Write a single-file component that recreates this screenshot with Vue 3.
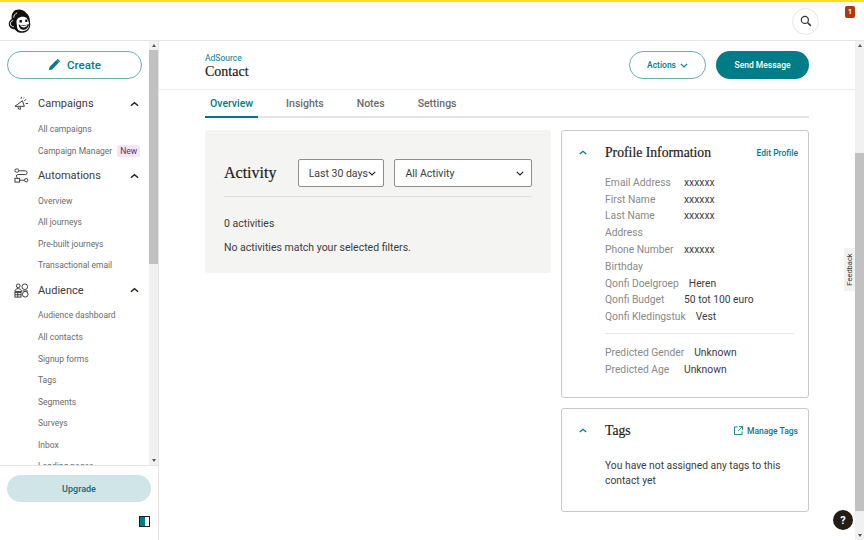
<script setup>
const groups = [
  {
    name: 'Campaigns',
    icon: 'campaigns',
    items: [{ label: 'All campaigns' }, { label: 'Campaign Manager', badge: 'New' }]
  },
  {
    name: 'Automations',
    icon: 'automations',
    items: [
      { label: 'Overview' },
      { label: 'All journeys' },
      { label: 'Pre-built journeys' },
      { label: 'Transactional email' }
    ]
  },
  {
    name: 'Audience',
    icon: 'audience',
    items: [
      { label: 'Audience dashboard' },
      { label: 'All contacts' },
      { label: 'Signup forms' },
      { label: 'Tags' },
      { label: 'Segments' },
      { label: 'Surveys' },
      { label: 'Inbox' },
      { label: 'Landing pages' }
    ]
  }
]

const tabs = ['Overview', 'Insights', 'Notes', 'Settings']

const profile = [
  ['Email Address', 'xxxxxx'],
  ['First Name', 'xxxxxx'],
  ['Last Name', 'xxxxxx'],
  ['Address', ''],
  ['Phone Number', 'xxxxxx'],
  ['Birthday', ''],
  ['Qonfi Doelgroep', 'Heren'],
  ['Qonfi Budget', '50 tot 100 euro'],
  ['Qonfi Kledingstuk', 'Vest']
]

const predicted = [
  ['Predicted Gender', 'Unknown'],
  ['Predicted Age', 'Unknown']
]
</script>

<template>
  <div class="app">
    <!-- Top bar -->
    <header class="topbar">
      <svg class="logo" viewBox="0 0 24 26">
        <path fill="#111" d="M8 1c4-1.500 9 0 11 3 3 2 4 6 4 10 1 4-1 9-6 10.500-4 1-8-.5-10-3.500-4 0-7-3-6-7 .5-2 2-3 3-4C3 6 5 2.500 8 1z"/>
        <path fill="#fff" d="M10 10c3-2.500 8-2.500 10 0 2 3 3 7 1 10-2 3.500-8 4-10.500 1.500-1.500-2-1-4.500-1.500-6.500-.5-2 0-4 1-5z"/>
        <path fill="#111" d="M12 11.500h2.500V14H12zM18 11h2.200v2.500H18zM11 16c3.500 1.200 7.500 1 11-.5-.3 4-3.500 6-6 6s-4.500-2-5-5.500z"/>
        <path fill="#fff" d="M12.500 17c2.500.6 5.500.5 8-.3-.6 1.500-2.600 2.500-4 2.500s-3.400-.8-4-2.200z"/>
        <path fill="none" stroke="#fff" stroke-width="1" d="M6 9c0-2 1-4 3.500-5M5.300 12c-2 .5-3 2-2.800 3.500.2 1.800 1.500 3 3.500 3"/>
      </svg>
      <button class="search-btn">
        <svg viewBox="0 0 16 16" width="12" height="12">
          <circle cx="6.500" cy="6.500" r="4.700" fill="none" stroke="#333" stroke-width="1.600"/>
          <path d="M10 10l4.500 4.500" stroke="#333" stroke-width="2"/>
        </svg>
      </button>
      <span class="notif">1</span>
    </header>

    <div class="body">
      <!-- Sidebar -->
      <aside class="sidebar">
        <div class="side-scroll">
          <nav class="nav">
            <button class="create-btn">
              <svg viewBox="0 0 14 14" width="12" height="12">
                <path fill="#007c89" d="M9.800 1.200l3 3-8 8L1 13l.8-3.800zM10.800.300l.8-.3 2.400 2.400-.3.800-.6.600-3-3z"/>
              </svg>
              Create
            </button>
            <section v-for="g in groups" :key="g.name" class="group">
              <div class="group-head">
                <svg class="group-icon" viewBox="0 0 16 16">
                  <g v-if="g.icon === 'campaigns'" fill="none" stroke="#333" stroke-width="1">
                    <path d="M1 11l8-6 2 6z"/>
                    <path d="M4 11.500l1 2.500h2l-.5-2.500"/>
                    <path d="M7.500 3l.5-2M11 5l2-1.500M12.500 8H15M10 2.500l.8-1"/>
                  </g>
                  <g v-else-if="g.icon === 'automations'" fill="none" stroke="#333" stroke-width="1">
                    <rect x="1" y="1" width="4" height="3.500" rx="1.500"/>
                    <rect x="1" y="11" width="5" height="4"/>
                    <circle cx="13" cy="13" r="1.800"/>
                    <path d="M5 3h7.500c2 0 2 4 0 4H4c-2 0-2 3 0 4M6 13h5"/>
                  </g>
                  <g v-else fill="none" stroke="#333" stroke-width="1">
                    <circle cx="4.500" cy="3" r="2"/>
                    <circle cx="11.500" cy="4" r="3"/>
                    <path d="M1 9c0-2 1.500-3 3.500-3S8 7 8 9z"/>
                    <rect x="1" y="10" width="6.500" height="5"/>
                    <path d="M1 12.500h6.500M4 10v5"/>
                    <circle cx="12" cy="12" r="3"/>
                    <path d="M9 8.500h6"/>
                  </g>
                </svg>
                <span class="group-name">{{ g.name }}</span>
                <svg class="caret" viewBox="0 0 10 6" width="9" height="6">
                  <path d="M1 5l4-3.500L9 5" fill="none" stroke="#241c15" stroke-width="1.500"/>
                </svg>
              </div>
              <a v-for="item in g.items" :key="item.label" class="nav-item">
                {{ item.label }}
                <span v-if="item.badge" class="badge">{{ item.badge }}</span>
              </a>
            </section>
          </nav>
          <div class="scrollbar">
            <span class="arrow up"></span>
            <div class="track side-track"><div class="thumb"></div></div>
            <span class="arrow down"></span>
          </div>
        </div>
        <div class="side-foot">
          <button class="upgrade-btn">Upgrade</button>
          <div class="collapse-row">
            <span class="collapse-icon"></span>
          </div>
        </div>
      </aside>

      <!-- Main -->
      <main class="main">
        <div class="main-inner">
          <div class="page-head">
            <div>
              <a class="crumb">AdSource</a>
              <h1>Contact</h1>
            </div>
            <div class="head-actions">
              <button class="btn-outline">
                Actions
                <svg viewBox="0 0 10 6" width="8" height="5">
                  <path d="M1 1l4 3.800L9 1" fill="none" stroke="#007c89" stroke-width="1.500"/>
                </svg>
              </button>
              <button class="btn-solid">Send Message</button>
            </div>
          </div>

          <div class="page-body">
            <div class="tabs">
              <a v-for="(t, i) in tabs" :key="t" class="tab" :class="{ active: i === 0 }">{{ t }}</a>
            </div>

            <div class="columns">
              <div class="activity">
                <div class="activity-head">
                  <h2>Activity</h2>
                  <div class="select short">
                    Last 30 days
                    <svg viewBox="0 0 10 6" width="8" height="5"><path d="M1 1l4 3.800L9 1" fill="none" stroke="#241c15" stroke-width="1.400"/></svg>
                  </div>
                  <div class="select long">
                    All Activity
                    <svg viewBox="0 0 10 6" width="8" height="5"><path d="M1 1l4 3.800L9 1" fill="none" stroke="#241c15" stroke-width="1.400"/></svg>
                  </div>
                </div>
                <p class="count">0 activities</p>
                <p class="empty">No activities match your selected filters.</p>
              </div>

              <div class="side-cards">
                <div class="card profile-card">
                  <div class="card-head">
                    <svg class="card-caret" viewBox="0 0 10 6" width="8" height="5">
                      <path d="M1 5l4-3.500L9 5" fill="none" stroke="#007c89" stroke-width="1.600"/>
                    </svg>
                    <h3>Profile Information</h3>
                    <a class="card-link">Edit Profile</a>
                  </div>
                  <div class="rows">
                    <div v-for="r in profile" :key="r[0]" class="row">
                      <span class="label">{{ r[0] }}</span>
                      <span class="value">{{ r[1] }}</span>
                    </div>
                  </div>
                  <hr class="rows-rule" />
                  <div class="rows">
                    <div v-for="r in predicted" :key="r[0]" class="row">
                      <span class="label">{{ r[0] }}</span>
                      <span class="value">{{ r[1] }}</span>
                    </div>
                  </div>
                </div>

                <div class="card tags-card">
                  <div class="card-head">
                    <svg class="card-caret" viewBox="0 0 10 6" width="8" height="5">
                      <path d="M1 5l4-3.500L9 5" fill="none" stroke="#007c89" stroke-width="1.600"/>
                    </svg>
                    <h3>Tags</h3>
                    <a class="card-link">
                      <svg viewBox="0 0 10 10" width="9" height="9">
                        <path d="M4 1H.600v8.400H9V6M5.500.600h4v4M9.300.800L4.500 5.500" fill="none" stroke="#007c89" stroke-width="1"/>
                      </svg>
                      Manage Tags
                    </a>
                  </div>
                  <p class="tags-text">You have not assigned any tags to this contact yet</p>
                </div>
              </div>
            </div>
          </div>

          <div class="feedback"><span>Feedback</span></div>
          <button class="help">?</button>
        </div>
        <div class="scrollbar">
          <span class="arrow up"></span>
          <div class="track main-track"><div class="thumb"></div></div>
          <span class="arrow down"></span>
        </div>
      </main>
    </div>
  </div>
</template>

<style scoped>
.app {
  width: 864px;
  height: 540px;
  display: flex;
  flex-direction: column;
  overflow: hidden;
  background: #fff;
  color: #241c15;
  font-family: Roboto, "Liberation Sans", sans-serif;
  font-size: 11.5px;
}

button {
  font-family: inherit;
  cursor: pointer;
}

/* Top bar */
.topbar {
  position: relative;
  flex: none;
  height: 41px;
  box-sizing: border-box;
  display: flex;
  align-items: center;
  border-top: 2px solid #ffe01b;
  border-bottom: 1px solid #e4e4e2;
  padding-left: 8px;
}

.logo {
  width: 23px;
  height: 25px;
}

.search-btn {
  margin-left: auto;
  margin-right: 45px;
  width: 27px;
  height: 27px;
  padding: 0;
  border: 1px solid #e6e6e4;
  border-radius: 50%;
  background: #fff;
  display: flex;
  align-items: center;
  justify-content: center;
}

.notif {
  position: absolute;
  left: 845px;
  top: 4px;
  width: 10px;
  height: 12px;
  border-radius: 2px;
  background: #b0380e;
  color: #fff;
  font-size: 8px;
  font-weight: 500;
  line-height: 12px;
  text-align: center;
}

.body {
  flex: 1;
  min-height: 0;
  display: flex;
}

/* Sidebar */
.sidebar {
  flex: none;
  width: 158px;
  display: flex;
  flex-direction: column;
  border-right: 1px solid #e4e4e2;
}

.side-scroll {
  flex: 1;
  min-height: 0;
  display: flex;
}

.nav {
  flex: 1;
  min-width: 0;
  overflow: hidden;
  padding: 10px 7px 0;
}

.create-btn {
  width: 135px;
  height: 28px;
  box-sizing: border-box;
  display: flex;
  align-items: center;
  justify-content: center;
  gap: 7px;
  padding: 0;
  border: 1px solid #6aaeb6;
  border-radius: 14px;
  background: #fff;
  color: #007c89;
  font-size: 11.5px;
  font-weight: 500;
}

.group-head {
  height: 28.400px;
  display: flex;
  align-items: center;
}

.group:first-of-type .group-head {
  margin-top: 10.800px;
}

.group-icon {
  width: 15px;
  height: 15px;
  margin-left: 7px;
  flex: none;
}

.group-name {
  margin-left: 9px;
  font-size: 11px;
  color: #403b3b;
}

.caret {
  margin-left: auto;
  margin-right: 3px;
}

.nav-item {
  display: flex;
  align-items: center;
  height: 21.600px;
  padding-left: 31px;
  font-size: 8.500px;
  color: #6b6b6b;
  white-space: nowrap;
}

.badge {
  margin-left: 5px;
  padding: 1px 3px;
  border-radius: 2px;
  background: #f8e3f7;
  color: #4a3a55;
  font-size: 8.500px;
}

.side-foot {
  flex: none;
  height: 75px;
  box-sizing: border-box;
  padding: 9px 6px 0 7px;
  border-top: 1px solid #e4e4e2;
}

.upgrade-btn {
  width: 144px;
  height: 27px;
  padding: 0;
  border: 0;
  border-radius: 14px;
  background: #d0e5e8;
  color: #1d6470;
  font-size: 9px;
  font-weight: 500;
}

.collapse-row {
  display: flex;
  justify-content: flex-end;
  margin-top: 14px;
  padding-right: 2px;
}

.collapse-icon {
  width: 11px;
  height: 11px;
  box-sizing: border-box;
  border: 1px solid #241c15;
  background: linear-gradient(to right, #007c89 55%, #fff 55%);
}

/* Scrollbars */
.scrollbar {
  flex: none;
  width: 9px;
  display: flex;
  flex-direction: column;
  background: #f1f1f1;
}

.arrow {
  flex: none;
  height: 9px;
  display: flex;
  align-items: center;
  justify-content: center;
}

.arrow::before {
  content: "";
  border-left: 2.500px solid transparent;
  border-right: 2.500px solid transparent;
}

.arrow.up::before {
  border-bottom: 3px solid #555;
}

.arrow.down::before {
  border-top: 3px solid #555;
}

.track {
  flex: 1;
  min-height: 0;
}

.thumb {
  background: #c1c1c1;
}

.side-track .thumb {
  height: 214px;
}

.main-track {
  padding-top: 103px;
}

.main-track .thumb {
  height: 358px;
}

/* Main */
.main {
  flex: 1;
  min-width: 0;
  display: flex;
}

.main-inner {
  position: relative;
  flex: 1;
  min-width: 0;
  overflow: hidden;
}

.page-head {
  height: 49px;
  box-sizing: border-box;
  display: flex;
  justify-content: space-between;
  align-items: center;
  padding: 0 46px;
  border-bottom: 1px solid #eeeeec;
}

.crumb {
  display: block;
  margin-top: 2px;
  color: #007c89;
  font-size: 8.500px;
  line-height: 11px;
}

h1,
h2,
h3 {
  margin: 0;
  font-family: "Liberation Serif", serif;
  font-weight: 400;
  color: #241c15;
}

h1 {
  font-size: 14px;
  line-height: 16px;
  -webkit-text-stroke: 0.2px #241c15;
}

.head-actions {
  display: flex;
  gap: 10px;
}

.btn-outline,
.btn-solid {
  height: 28px;
  box-sizing: border-box;
  padding: 0;
  border-radius: 14px;
  font-size: 8.500px;
  font-weight: 500;
}

.btn-outline {
  width: 77px;
  display: flex;
  align-items: center;
  justify-content: center;
  gap: 4px;
  border: 1px solid #6aaeb6;
  background: #fff;
  color: #007c89;
}

.btn-solid {
  width: 93px;
  border: 0;
  background: #007c89;
  color: #fff;
}

.page-body {
  padding: 0 46px;
}

.tabs {
  display: flex;
  gap: 23px;
  height: 28px;
  box-sizing: border-box;
  border-bottom: 2px solid #e4e4e2;
}

.tab {
  height: 28px;
  box-sizing: border-box;
  padding: 0 5px;
  line-height: 28px;
  font-size: 10.500px;
  font-weight: 500;
  color: #6b6b6b;
}

.tab.active {
  color: #007c89;
  border-bottom: 2px solid #007c89;
}

.columns {
  display: grid;
  grid-template-columns: 346px 248px;
  gap: 10px;
  align-items: start;
  margin-top: 12px;
}

.activity {
  height: 143px;
  box-sizing: border-box;
  padding: 29px 19px 0;
  border-radius: 3px;
  background: #f4f4f2;
}

.activity-head {
  display: flex;
  align-items: center;
  height: 28px;
  padding-bottom: 9px;
  border-bottom: 1px solid #dfdfdd;
}

.activity-head h2 {
  width: 74px;
  font-size: 16px;
  -webkit-text-stroke: 0.2px #241c15;
}

.select {
  height: 28px;
  box-sizing: border-box;
  display: flex;
  align-items: center;
  justify-content: space-between;
  padding: 0 7px 0 10px;
  border: 1px solid #8f8f8d;
  border-radius: 2px;
  background: #fff;
  font-size: 10.500px;
  color: #403b3b;
  white-space: nowrap;
}

.select.short {
  width: 87px;
}

.select.long {
  width: 138px;
  margin-left: 10px;
}

.count {
  margin: 20px 0 0;
  font-size: 10.500px;
  line-height: 14px;
  color: #403b3b;
}

.empty {
  margin: 10px 0 0;
  font-size: 10.500px;
  line-height: 14px;
  color: #403b3b;
}

.side-cards {
  display: flex;
  flex-direction: column;
  gap: 10px;
}

.card {
  box-sizing: border-box;
  padding: 0 10px 0 43px;
  border: 1px solid #c9c9c7;
  border-radius: 3px;
}

.profile-card {
  height: 268px;
}

.tags-card {
  height: 104px;
}

.card-head {
  position: relative;
  display: flex;
  align-items: center;
  justify-content: space-between;
  height: 43px;
}

.card-caret {
  position: absolute;
  left: -26px;
  top: 19px;
}

h3 {
  font-size: 13.700px;
  -webkit-text-stroke: 0.2px #241c15;
}

.card-link {
  display: flex;
  align-items: center;
  gap: 4px;
  color: #007c89;
  font-size: 8.500px;
  font-weight: 500;
}

.rows {
  display: flex;
  flex-direction: column;
}

.profile-card .rows:first-of-type {
  margin-top: 13px;
}

.row {
  display: flex;
  height: 16.800px;
  align-items: center;
  font-size: 10.300px;
}

.label {
  min-width: 69px;
  margin-right: 10px;
  color: #8a8a88;
  white-space: nowrap;
}

.value {
  color: #403b3b;
  white-space: nowrap;
}

.rows-rule {
  height: 1px;
  margin: 8px 4px 10px 0;
  border: 0;
  background: #e8e8e6;
}

.tags-text {
  margin: 7px 0 0;
  font-size: 10.300px;
  line-height: 14.500px;
  color: #403b3b;
}

.feedback {
  position: absolute;
  right: 0;
  top: 207px;
  width: 11px;
  height: 43px;
  display: flex;
  align-items: center;
  justify-content: center;
  background: #f2f2f0;
  font-size: 7.500px;
  color: #403b3b;
}

.feedback span {
  transform: rotate(-90deg);
  white-space: nowrap;
}

.help {
  position: absolute;
  left: 674px;
  top: 469px;
  width: 20px;
  height: 20px;
  padding: 0;
  border: 0;
  border-radius: 50%;
  background: #241c15;
  color: #fff;
  font-size: 11px;
  font-weight: 700;
}
</style>
